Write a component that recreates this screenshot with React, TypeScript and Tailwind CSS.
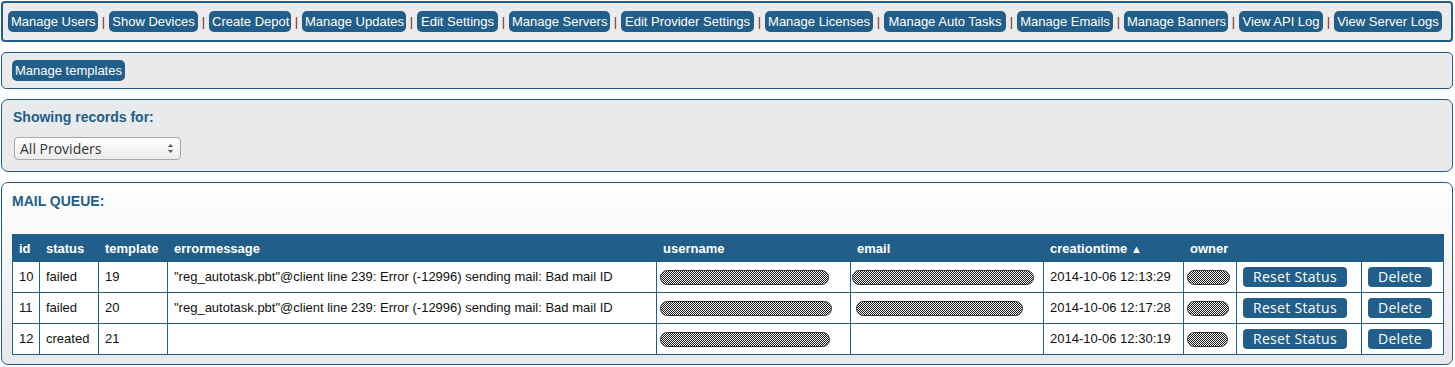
import React from "react";

const navItems: [string, number][] = [
  ["Manage Users", 90],
  ["Show Devices", 89],
  ["Create Depot", 82],
  ["Manage Updates", 104],
  ["Edit Settings", 81],
  ["Manage Servers", 101],
  ["Edit Provider Settings", 133],
  ["Manage Licenses", 108],
  ["Manage Auto Tasks", 122],
  ["Manage Emails", 96],
  ["Manage Banners", 104],
  ["View API Log", 84],
  ["View Server Logs", 108],
];

function NavBtn({ label, w }: { label: string; w?: number }) {
  return (
    <span
      className="inline-block h-[21px] shrink-0 cursor-pointer whitespace-nowrap rounded-[5px] bg-[#225e8a] px-[3px] text-center text-[13px] leading-[21px] text-white"
      style={w ? { width: w } : undefined}
    >
      {label}
    </span>
  );
}

function Scribble({ w, ml = 0 }: { w: number; ml?: number }) {
  return (
    <span
      className="inline-block h-[15px] rounded-full border border-[#333] bg-[repeating-conic-gradient(#111111_0%_25%,#ffffff_0%_50%)] bg-[length:2px_2px] align-middle"
      style={{ width: w, marginLeft: ml }}
    />
  );
}

function ActBtn({ label, w }: { label: string; w: number }) {
  return (
    <span
      className="inline-block h-[20px] rounded-[4px] bg-[#225e8a] text-center font-['Open_Sans',sans-serif] text-[14px] leading-[20px] tracking-[0.3px] text-white"
      style={{ width: w }}
    >
      {label}
    </span>
  );
}

type Row = {
  id: string;
  status: string;
  template: string;
  err: string;
  user: number;
  userMl: number;
  email: number;
  emailMl: number;
  time: string;
  owner: number;
};

const rows: Row[] = [
  {
    id: "10",
    status: "failed",
    template: "19",
    err: '"reg_autotask.pbt"@client line 239: Error (-12996) sending mail: Bad mail ID',
    user: 169,
    userMl: 0,
    email: 182,
    emailMl: 0,
    time: "2014-10-06 12:13:29",
    owner: 43,
  },
  {
    id: "11",
    status: "failed",
    template: "20",
    err: '"reg_autotask.pbt"@client line 239: Error (-12996) sending mail: Bad mail ID',
    user: 172,
    userMl: 0,
    email: 167,
    emailMl: 4,
    time: "2014-10-06 12:17:28",
    owner: 42,
  },
  {
    id: "12",
    status: "created",
    template: "21",
    err: "",
    user: 170,
    userMl: 0,
    email: 0,
    emailMl: 0,
    time: "2014-10-06 12:30:19",
    owner: 41,
  },
];

export default function App() {
  const td = "border border-[#225e8a] px-[6px] align-middle";
  const th = "border border-[#225e8a] px-[6px] pt-[1px]";
  return (
    <div className="min-h-[367px] bg-white pl-[1px] pr-[2px] font-['Liberation_Sans',Arial,sans-serif] text-[13px] text-[#111]">
      {/* Top nav panel */}
      <div className="mt-[1px] flex items-center rounded-[4px] border-2 border-[#225e8a] bg-[#ebebed] px-[5px] py-[8px] leading-[21px]">
        {navItems.map(([n, w], i) => (
          <React.Fragment key={n}>
            {i > 0 && (
              <span className="w-[11px] shrink-0 text-center text-[13px] text-[#7b2d12]">|</span>
            )}
            <NavBtn label={n} w={w} />
          </React.Fragment>
        ))}
      </div>

      {/* Templates panel */}
      <div className="mt-[10px] rounded-[5px] border border-[#225e8a] bg-[#e9eaec] px-[10px] py-[7px] leading-[21px]">
        <NavBtn label="Manage templates" />
      </div>

      {/* Showing records panel */}
      <div className="mt-[10px] rounded-[7px] border border-[#225e8a] bg-[#e9eaec] pl-[11px] pt-[9px] pb-[11px]">
        <div className="text-[14px] font-bold leading-[16px] text-[#215e8a]">Showing records for:</div>
        <div className="mt-[12px] ml-[1px] flex h-[23px] w-[167px] items-center justify-between rounded-[4px] border border-[#a9a9a9] bg-gradient-to-b from-[#ffffff] to-[#ebebeb] pl-[5px] pr-[6px] font-['Open_Sans',sans-serif] text-[14px] text-[#333]">
          <span>All Providers</span>
          <svg width="7" height="11" viewBox="0 0 7 11">
            <path d="M3.5 1 L6 4 L1 4 Z" fill="#555" />
            <path d="M3.5 10 L6 7 L1 7 Z" fill="#555" />
          </svg>
        </div>
      </div>

      {/* Mail queue panel */}
      <div className="mt-[10px] rounded-[7px] border border-[#225e8a] bg-gradient-to-b from-[#ffffff] to-[#e7e8ea] pl-[10px] pr-[9px] pt-[10px] pb-[9px]">
        <div className="text-[14px] font-bold leading-[16px] text-[#215e8a]">MAIL QUEUE:</div>
        <table className="mt-[25px] w-[1431px] table-fixed border-collapse bg-white">
          <colgroup>
            <col className="w-[27px]" />
            <col className="w-[59px]" />
            <col className="w-[69px]" />
            <col className="w-[489px]" />
            <col className="w-[194px]" />
            <col className="w-[193px]" />
            <col className="w-[140px]" />
            <col className="w-[53px]" />
            <col className="w-[125px]" />
            <col className="w-[82px]" />
          </colgroup>
          <thead>
            <tr className="h-[27px] bg-[#225e8a] text-left text-[13px] font-bold text-white">
              <th className={th}>id</th>
              <th className={th}>status</th>
              <th className={th}>template</th>
              <th className={th}>errormessage</th>
              <th className={th}>username</th>
              <th className={th}>email</th>
              <th className={th}>
                creationtime <span className="text-[11px]">▲</span>
              </th>
              <th className={th}>owner</th>
              <th className={th}></th>
              <th className={th}></th>
            </tr>
          </thead>
          <tbody>
            {rows.map((r) => (
              <tr key={r.id} className="h-[31px]">
                <td className={td}>{r.id}</td>
                <td className={td}>{r.status}</td>
                <td className={td}>{r.template}</td>
                <td className={`${td} whitespace-nowrap`}>{r.err}</td>
                <td className="border border-[#225e8a] px-[3px] align-middle leading-none">
                  <Scribble w={r.user} ml={r.userMl} />
                </td>
                <td className="border border-[#225e8a] px-[1px] align-middle leading-none">
                  {r.email > 0 && <Scribble w={r.email} ml={r.emailMl} />}
                </td>
                <td className={td}>{r.time}</td>
                <td className="border border-[#225e8a] px-[3px] align-middle leading-none">
                  <Scribble w={r.owner} />
                </td>
                <td className={`${td} leading-none`}>
                  <ActBtn label="Reset Status" w={104} />
                </td>
                <td className={`${td} leading-none`}>
                  <ActBtn label="Delete" w={64} />
                </td>
              </tr>
            ))}
          </tbody>
        </table>
      </div>
    </div>
  );
}
